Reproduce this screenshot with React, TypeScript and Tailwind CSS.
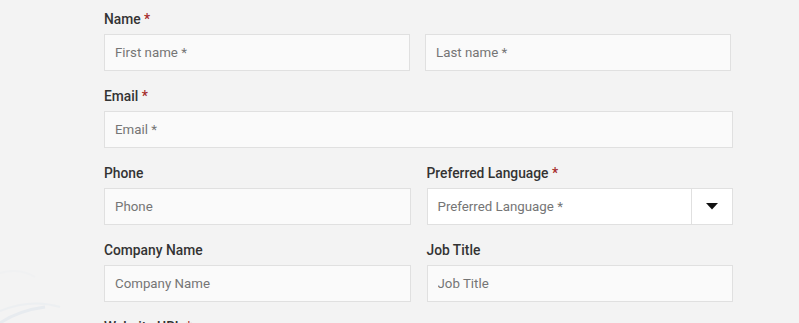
import React from 'react';

const font = { fontFamily: 'Roboto, "Liberation Sans", Arial, sans-serif' };

function Label({ text, required }: { text: string; required?: boolean }) {
  return (
    <label className="block text-[13.8px] leading-[20px] font-medium text-[#333] mb-[5px]">
      {text}
      {required && <span className="text-[#a52a2a]"> *</span>}
    </label>
  );
}

function Input({ placeholder }: { placeholder: string }) {
  return (
    <input
      placeholder={placeholder}
      className="block w-full h-[37px] px-[10px] bg-[#fafafa] border border-[#e0e0e0] text-[13.3px] text-[#333] placeholder:text-[#757575] outline-none"
    />
  );
}

function Select({ placeholder }: { placeholder: string }) {
  return (
    <div className="flex h-[37px] bg-white border border-[#e0e0e0]">
      <div className="flex-1 flex items-center px-[10px] text-[13.3px] text-[#757575]">{placeholder}</div>
      <div className="w-[41px] flex items-center justify-center border-l border-[#e0e0e0]">
        <svg width="12" height="7" viewBox="0 0 12 7">
          <path d="M0 0h12L6 6.5z" fill="#111" />
        </svg>
      </div>
    </div>
  );
}

export default function App() {
  return (
    <div className="relative min-h-[323px] h-[323px] overflow-hidden bg-[#f3f3f3]" style={font}>
      <svg className="absolute left-0 bottom-0 opacity-30" width="90" height="90" viewBox="0 0 90 90">
        <path d="M0 78 C20 70 40 68 60 74" stroke="#dfe6ef" strokeWidth="2" fill="none" />
        <path d="M0 90 C15 80 30 76 45 74" stroke="#cdd9e8" strokeWidth="3" fill="none" />
        <path d="M0 40 C15 36 25 38 35 44" stroke="#ebeef2" strokeWidth="2" fill="none" />
      </svg>
      <div className="relative ml-[104px] w-[629px] pt-[9px] flex flex-col gap-[15px]">
        <div>
          <Label text="Name" required />
          <div className="grid grid-cols-2 gap-[15px] w-[627px]">
            <Input placeholder="First name *" />
            <Input placeholder="Last name *" />
          </div>
        </div>
        <div>
          <Label text="Email" required />
          <Input placeholder="Email *" />
        </div>
        <div className="grid grid-cols-2 gap-4">
          <div>
            <Label text="Phone" />
            <Input placeholder="Phone" />
          </div>
          <div>
            <Label text="Preferred Language" required />
            <Select placeholder="Preferred Language *" />
          </div>
        </div>
        <div className="grid grid-cols-2 gap-4">
          <div>
            <Label text="Company Name" />
            <Input placeholder="Company Name" />
          </div>
          <div>
            <Label text="Job Title" />
            <Input placeholder="Job Title" />
          </div>
        </div>
        <div>
          <Label text="Website URL" required />
          <Input placeholder="Website URL *" />
        </div>
      </div>
    </div>
  );
}
